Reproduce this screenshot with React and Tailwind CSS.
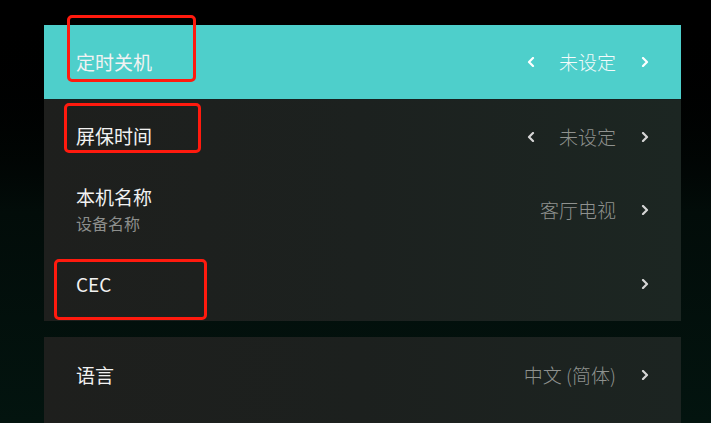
import React from 'react';

const font = { fontFamily: '"Noto Sans CJK SC", "Noto Sans", sans-serif' };

function Chevron({ dir = 'right', className = '' }) {
    const pts = dir === 'right' ? '2,1 6,5 2,9' : '6,1 2,5 6,9';
    return (
        <svg width="8" height="10" viewBox="0 0 8 10" className={className}>
            <polyline points={pts} fill="none" stroke="currentColor" strokeWidth="2.2" strokeLinecap="round" strokeLinejoin="round" />
        </svg>
    );
}

function Row({ title, sub, value, arrows, active, divider }) {
    return (
        <div
            className={`h-[74px] flex items-center justify-between pl-8 pr-8 ${active ? 'bg-[#4ecfcb]' : ''} ${divider ? 'border-t border-[#17211f]' : ''}`}
        >
            <div className="flex flex-col">
                <span className="text-[19px] leading-[24px] text-[#f2f2f2] -mt-[1px]">{title}</span>
                {sub && <span className="text-[16px] leading-[22px] mt-[3px] text-[#8c8e8c]">{sub}</span>}
            </div>
            <div className="flex items-center">
                {arrows && <Chevron dir="left" className={active ? 'text-white mr-[24px]' : 'text-[#d6d6d6] mr-[24px]'} />}
                {value && (
                    <span className={`text-[19px] leading-[24px] font-light ${active ? 'text-[#f4fbfb]' : 'text-[#8f928f]'}`}>{value}</span>
                )}
                <Chevron dir="right" className={`ml-[25px] ${active ? 'text-white' : 'text-[#d6d6d6]'}`} />
            </div>
        </div>
    );
}

export default function App() {
    return (
        <div
            className="relative w-[711px] h-[423px] overflow-hidden bg-gradient-to-b from-[#000000] via-[#020c09] to-[#03140f]"
            style={font}
        >
            <div className="pt-[25px] pl-[44px] w-[681px] flex flex-col gap-4">
                <div className="bg-gradient-to-r from-[#1e1f1d] via-[#1c211f] to-[#1c2622] flex flex-col">
                    <Row title="定时关机" value="未设定" arrows active />
                    <Row title="屏保时间" value="未设定" arrows divider />
                    <Row title="本机名称" sub="设备名称" value="客厅电视" />
                    <Row title="CEC" />
                </div>
                <div className="bg-gradient-to-r from-[#1e1f1d] via-[#1c201e] to-[#1c2421] flex flex-col h-[100px]">
                    <div className="h-[76px] flex items-center">
                        <div className="w-full">
                            <Row title="语言" value="中文 (简体)" />
                        </div>
                    </div>
                </div>
            </div>

            {/* red annotation boxes */}
            <div className="absolute left-[67px] top-[15px] w-[129px] h-[67px] border-[3px] border-[#ff1a0e] rounded-[5px]" />
            <div className="absolute left-[64px] top-[103px] w-[137px] h-[50px] border-[3px] border-[#ff1a0e] rounded-[5px]" />
            <div className="absolute left-[54px] top-[259px] w-[153px] h-[61px] border-[3px] border-[#ff1a0e] rounded-[5px]" />
        </div>
    );
}
